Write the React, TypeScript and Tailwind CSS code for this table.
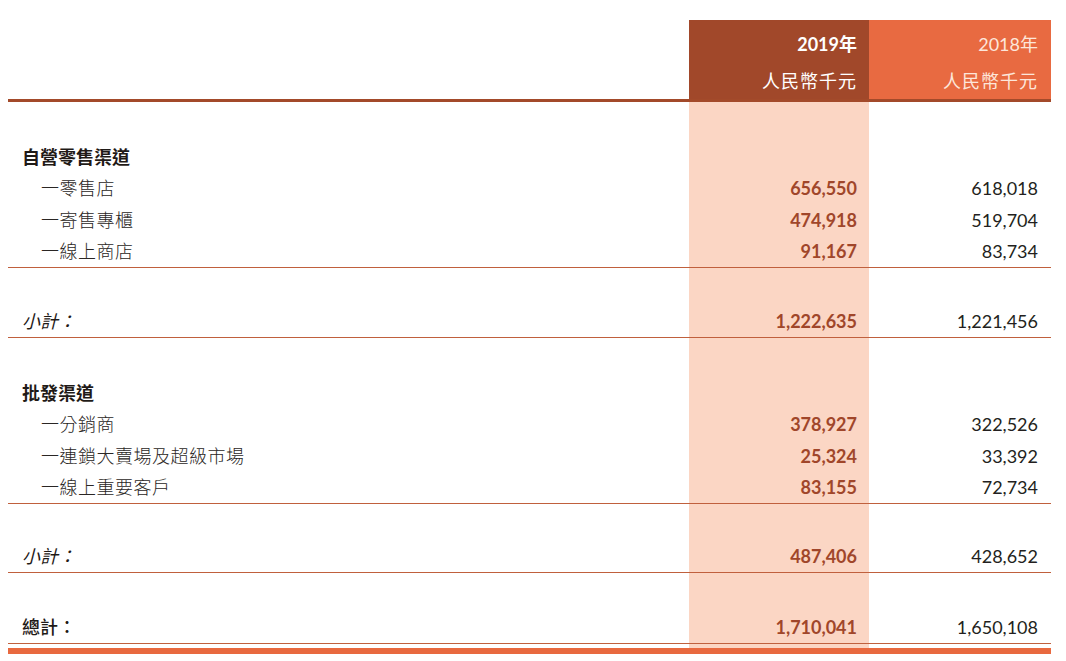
const CJK = "font-['Lato','Noto_Sans_CJK_TC',sans-serif]";

type Row = { label: string; a: string; b: string; h: string };

const RETAIL: Row[] = [
  { label: "一零售店", a: "656,550", b: "618,018", h: "h-[31px]" },
  { label: "一寄售專櫃", a: "474,918", b: "519,704", h: "h-[32px]" },
  { label: "一線上商店", a: "91,167", b: "83,734", h: "h-[31px]" },
];

const WHOLESALE: Row[] = [
  { label: "一分銷商", a: "378,927", b: "322,526", h: "h-[31px]" },
  { label: "一連鎖大賣場及超級市場", a: "25,324", b: "33,392", h: "h-[32px]" },
  { label: "一線上重要客戶", a: "83,155", b: "72,734", h: "h-[31px]" },
];

function Spacer({ h }: { h: string }) {
  return (
    <div className={`grid grid-cols-[681px_180px_182px] ${h}`}>
      <div />
      <div className="bg-[#fbd6c4]" />
      <div />
    </div>
  );
}

function Line() {
  return <div className="h-px w-[1043px] bg-[#c0603d]" />;
}

function DataRow({
  label,
  a,
  b,
  kind = "item",
  h = "h-[32px]",
}: {
  label: string;
  a?: string;
  b?: string;
  kind?: "head" | "item" | "sub" | "total";
  h?: string;
}) {
  const labelCls =
    kind === "head"
      ? "pl-[14px] font-bold text-[#1f1a17]"
      : kind === "item"
        ? "pl-[33px] font-light text-[#2a2624] tracking-[0.5px]"
        : kind === "sub"
          ? "pl-[14px] italic text-[#1f1a17]"
          : "pl-[14px] font-medium text-[#1f1a17]";
  return (
    <div className={`grid grid-cols-[681px_180px_182px] ${h}`}>
      <div className={`flex items-center text-[18px] ${labelCls}`}>{label}</div>
      <div className="flex items-center justify-end bg-[#fbd6c4] pr-[12px] text-[18px] font-bold text-[#a0462a]">
        {a}
      </div>
      <div className="flex items-center justify-end pr-[13px] text-[18px] text-[#231f20]">
        {b}
      </div>
    </div>
  );
}

export default function App() {
  return (
    <div className={`h-[661px] w-[1066px] overflow-hidden bg-white pl-[8px] pt-[20px] ${CJK}`}>
      <div className="grid h-[79px] grid-cols-[681px_180px_182px]">
        <div />
        <div className="flex flex-col items-end bg-[#a1482a] pr-[12px] pt-[11px] text-white">
          <div className="text-[18px] font-bold leading-[26px]">2019年</div>
          <div className="mt-[12px] pr-[0px] text-[18px] leading-[24px] tracking-[1px]">人民幣千元</div>
        </div>
        <div className="flex flex-col items-end bg-[#e86a41] pr-[13px] pt-[11px] text-[#fde6da]">
          <div className="text-[18px] leading-[26px]">2018年</div>
          <div className="mt-[12px] text-[18px] leading-[24px] tracking-[1px]">人民幣千元</div>
        </div>
      </div>
      <div className="h-[3px] w-[1043px] bg-[#a34a2a]" />

      <Spacer h="h-[39px]" />
      <DataRow label="自營零售渠道" kind="head" />
      {RETAIL.map((r) => (
        <DataRow key={r.label} {...r} />
      ))}
      <Line />
      <Spacer h="h-[38px]" />
      <DataRow label="小計：" a="1,222,635" b="1,221,456" kind="sub" h="h-[31px]" />
      <Line />

      <Spacer h="h-[39px]" />
      <DataRow label="批發渠道" kind="head" />
      {WHOLESALE.map((r) => (
        <DataRow key={r.label} {...r} />
      ))}
      <Line />
      <Spacer h="h-[37px]" />
      <DataRow label="小計：" a="487,406" b="428,652" kind="sub" h="h-[31px]" />
      <Line />

      <Spacer h="h-[39px]" />
      <DataRow label="總計：" a="1,710,041" b="1,650,108" kind="total" h="h-[31px]" />
      <Line />
      <Spacer h="h-[4px]" />
      <div className="h-[6px] w-[1043px] bg-[#e8693f]" />
    </div>
  );
}
